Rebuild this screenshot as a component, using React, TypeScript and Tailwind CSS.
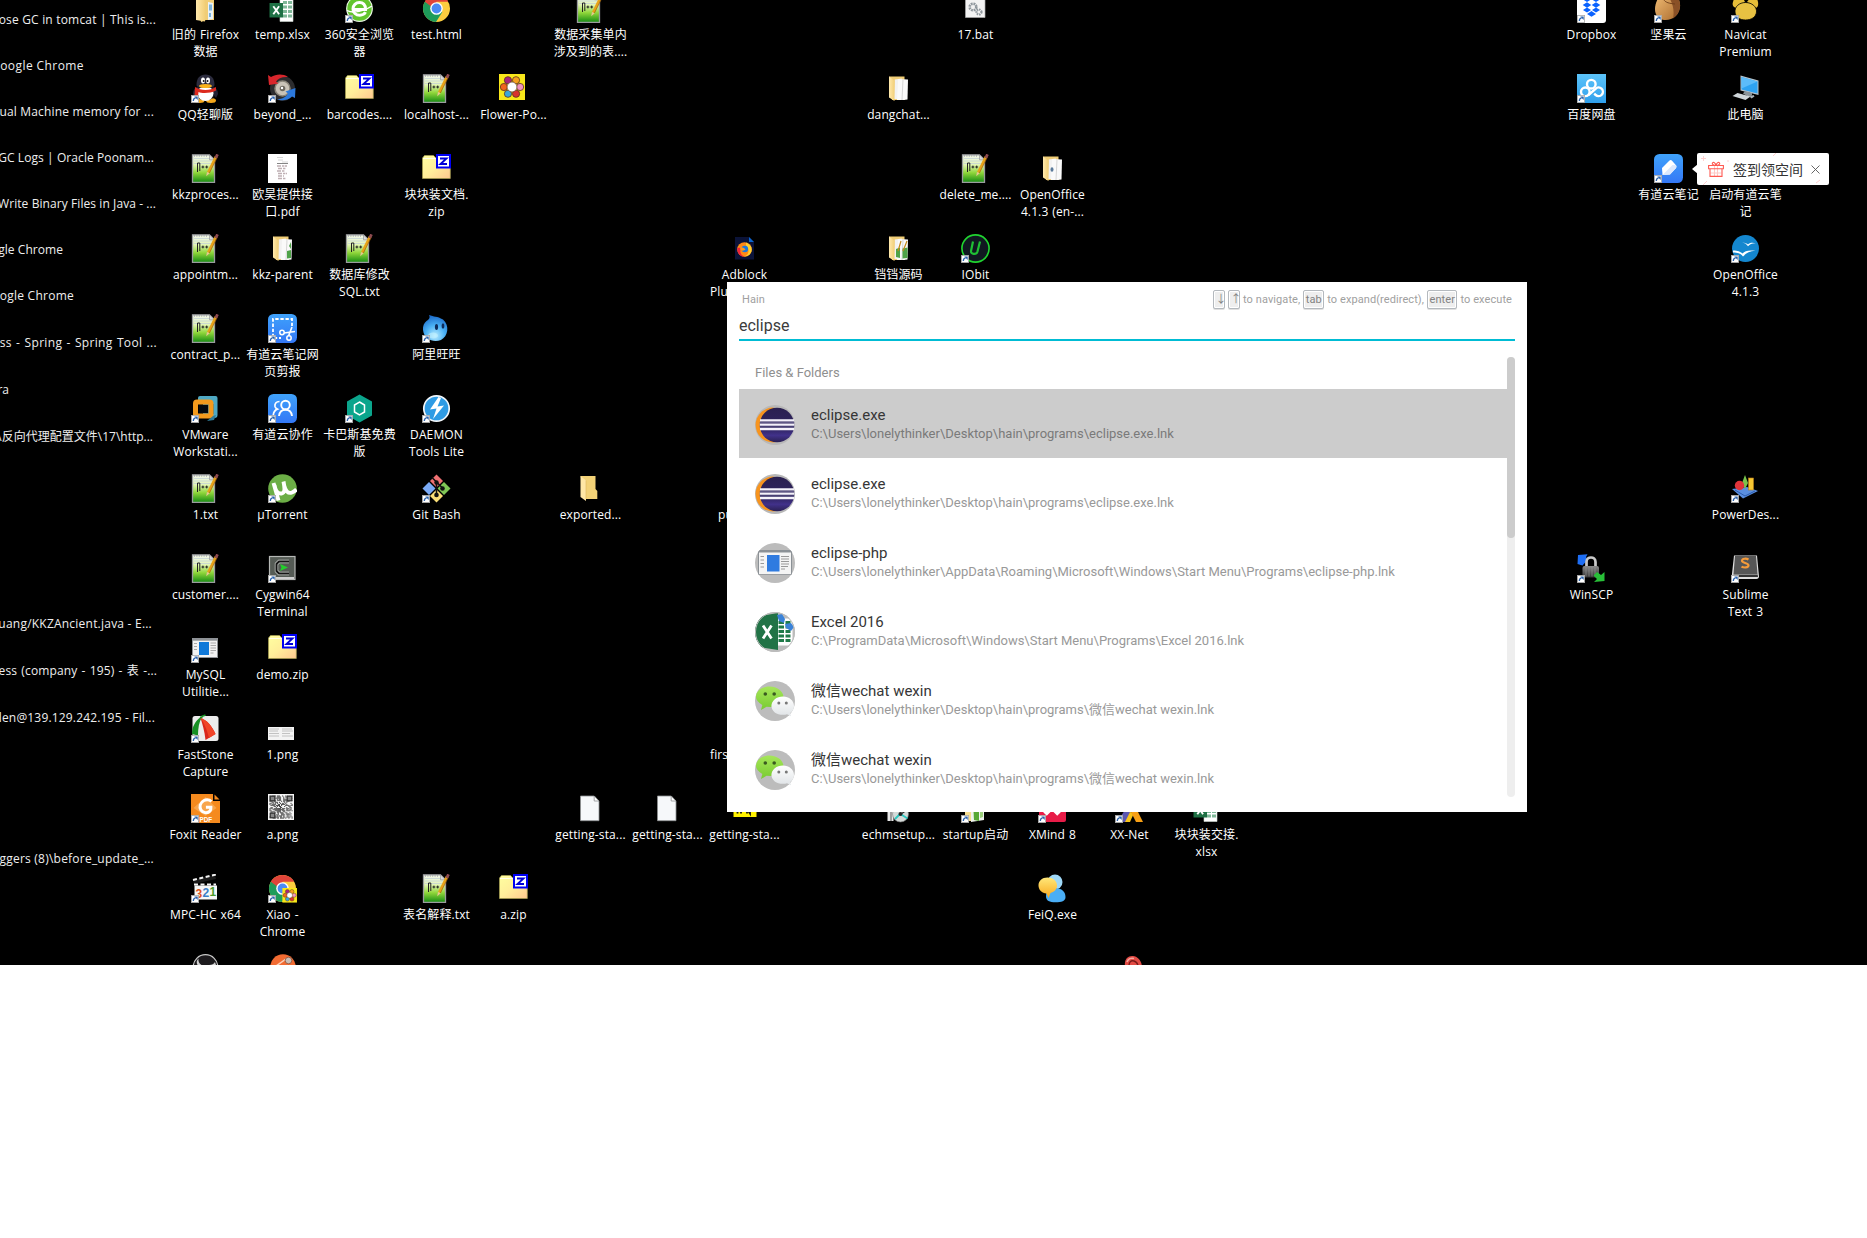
import React from 'react';

const defs = (
  <svg width="0" height="0" className="absolute">
    <defs>
      <linearGradient id="gNote" x1="0" y1="0" x2="0" y2="1">
        <stop offset="0" stopColor="#f4f8f0" />
        <stop offset=".35" stopColor="#e4f5b8" />
        <stop offset=".65" stopColor="#8fd63a" />
        <stop offset="1" stopColor="#138a12" />
      </linearGradient>
      <linearGradient id="gZip" x1="0" y1="0" x2="1" y2="1">
        <stop offset="0" stopColor="#ffffa0" />
        <stop offset=".5" stopColor="#ffee9a" />
        <stop offset="1" stopColor="#ffc890" />
      </linearGradient>
      <linearGradient id="gFold" x1="0" y1="0" x2="1" y2="0">
        <stop offset="0" stopColor="#ffe9ad" />
        <stop offset="1" stopColor="#f2cf78" />
      </linearGradient>
      <linearGradient id="gBlue" x1="0" y1="0" x2="0" y2="1">
        <stop offset="0" stopColor="#3fa2fb" />
        <stop offset="1" stopColor="#3478f6" />
      </linearGradient>
      <linearGradient id="gSky" x1="0" y1="0" x2="0" y2="1">
        <stop offset="0" stopColor="#5cc4fa" />
        <stop offset="1" stopColor="#2f9fec" />
      </linearGradient>
      <linearGradient id="gGray" x1="0" y1="0" x2="0" y2="1">
        <stop offset="0" stopColor="#8a8a8a" />
        <stop offset="1" stopColor="#333" />
      </linearGradient>
      <linearGradient id="gNut" x1="0" y1="0" x2="1" y2="1">
        <stop offset="0" stopColor="#f4c078" />
        <stop offset="1" stopColor="#a8692c" />
      </linearGradient>
      <radialGradient id="gDrop" cx=".5" cy=".8" r=".8">
        <stop offset="0" stopColor="#b8ecff" />
        <stop offset=".5" stopColor="#4ab0f4" />
        <stop offset="1" stopColor="#1a68c8" />
      </radialGradient>
      <linearGradient id="gWx" x1="0" y1="0" x2="0" y2="1">
        <stop offset="0" stopColor="#a6e65a" />
        <stop offset="1" stopColor="#78cb30" />
      </linearGradient>
      <linearGradient id="gWh" x1="0" y1="0" x2="0" y2="1">
        <stop offset="0" stopColor="#ffffff" />
        <stop offset="1" stopColor="#dfe3e6" />
      </linearGradient>
      <linearGradient id="gYel" x1="0" y1="0" x2="0" y2="1">
        <stop offset="0" stopColor="#ffe87a" />
        <stop offset="1" stopColor="#f9a81c" />
      </linearGradient>
      <linearGradient id="gEcl" x1="0" y1="0" x2="0" y2="1">
        <stop offset="0" stopColor="#2a2050" />
        <stop offset=".6" stopColor="#2f2460" />
        <stop offset=".8" stopColor="#41318a" />
        <stop offset="1" stopColor="#2a2052" />
      </linearGradient>
    </defs>
  </svg>
);

const note = (
  <g>
    <path d="M1.5.8h17l5 5v22.700h-22z" fill="url(#gNote)" stroke="#9a9c9e" strokeWidth="1.300" />
    <path d="M3 4.500h16M3 7h18M3 9.500h19" stroke="#bfcfd8" strokeWidth=".7" />
    <path d="M3 2h14" stroke="#8c9094" strokeWidth="1" strokeDasharray="1 1.400" />
    <path d="M18.500.8v5h5z" fill="#d8dadc" stroke="#8c8c8c" strokeWidth=".6" />
    <path d="M6.500 18V9h2.300V17" fill="none" stroke="#222" strokeWidth="1" />
    <path d="M10.500 13h2.800M11.900 11.600v2.800M14.300 13h2.800M15.700 11.600v2.800" stroke="#222" strokeWidth="1" />
    <path d="M25 2.500 17.200 18.500" stroke="#e8a318" strokeWidth="2.600" />
    <path d="M26.300 3.200 18.400 19" stroke="#a8660a" strokeWidth=".8" />
    <path d="m16 18-.8 4.200 3.400-2.900z" fill="#e8c690" />
    <path d="M26.500.3 24.700 4" stroke="#8c4a50" strokeWidth="2.800" />
  </g>
);

const zip = (
  <g>
    <path d="M.5 24.500V4l2-2.500h9L14 4v1h14.300v19.500z" fill="url(#gZip)" stroke="#a8a050" strokeWidth=".7" />
    <path d="M1 4.500h13" stroke="#fff" strokeWidth=".8" />
    <rect x="15" y="1" width="13" height="12.500" fill="#fff" stroke="#0000f4" strokeWidth="2" />
    <path d="M18 4.500h6.500L18.500 10H25" fill="none" stroke="#0000d8" strokeWidth="1.900" />
  </g>
);

const folder = (mark?: React.ReactNode) => (
  <g>
    <path d="M5 2.500h15.500v4L21 26H8z" fill="#f0cd76" />
    <path d="m10 25 .8-19.500 7-1 .7 20.500z" fill="#f2f2f2" />
    <path d="m13 26 1.200-21 9.800.5-.5 20-4 .5z" fill="#fafafa" />
    <path d="m18 26 1-20.500" stroke="#ccc" strokeWidth=".8" />
    {mark}
    <path d="m5 2.500 5.500 4.200V27L5 23.500z" fill="url(#gFold)" />
  </g>
);

const folderPlain = (
  <g>
    <path d="M4.500 2h15v13l1.800 2v8H10z" fill="#f3d277" />
    <path d="m4.500 2 5.500 4.500V27l-5.500-4z" fill="#ffe7a6" />
    <path d="M10 6.500V25" stroke="#dcb760" strokeWidth=".6" />
  </g>
);

const page = (
  <g>
    <path d="M4.500 2h13.700l4.800 5v19.700H4.500z" fill="#f6f8fa" stroke="#8e9092" strokeWidth=".8" />
    <path d="M18.200 2v5H23z" fill="#fff" stroke="#8e9092" strokeWidth=".8" />
  </g>
);

const excel = (
  <g>
    <path d="M12 1h13v26.500H12z" fill="#fff" stroke="#cfd8d2" strokeWidth=".6" />
    <path d="M15 4h9M15 8.500h9M15 13h9M15 17.500h9M15 22h9" stroke="#7fb898" strokeWidth="2.800" strokeDasharray="4 1" />
    <rect x="1.500" y="9" width="13.500" height="14.500" fill="#1f7145" />
    <path d="m5.300 12.300 5.800 8M11.100 12.300l-5.800 8" stroke="#fff" strokeWidth="1.900" />
  </g>
);

const chrome = (
  <g>
    <circle cx="14.500" cy="14.500" r="13.500" fill="#fccd3f" />
    <path d="M14.500 14.500 2.800 7.700A13.500 13.500 0 0 1 26.200 7.700H14.500z" fill="#e0443a" />
    <path d="M14.500 14.500 2.800 7.700A13.500 13.500 0 0 0 14 28l6.300-10z" fill="#1d9c5a" />
    <path d="M3 7.500 8.500 17l6-9.300z" fill="#e0443a" />
    <path d="M2.800 7.700 8.800 18l5-2z" fill="#1d9c5a" />
    <circle cx="14.500" cy="14.500" r="6.300" fill="#fff" />
    <circle cx="14.500" cy="14.500" r="4.900" fill="#4a8af4" />
  </g>
);

const petals = (s: number, ox: number, oy: number) => {
  const colors = ['#f5a11e', '#f093bd', '#d8322e', '#3aa6d8', '#f0641e', '#a8277c'];
  return (
    <g transform={`translate(${ox} ${oy}) scale(${s})`}>
      <rect width="26" height="26" fill="#f8e71a" />
      {colors.map((c, i) => {
        const a = -1.05 + (i * Math.PI) / 3;
        return <circle key={c} cx={13 + 8.100 * Math.cos(a)} cy={13 + 7.800 * Math.sin(a)} r="3.600" fill={c} stroke="#5a3020" strokeWidth=".8" />;
      })}
      <circle cx="13" cy="13" r="4.900" fill="#fff" stroke="#5a3020" strokeWidth=".6" />
    </g>
  );
};

const blueBox = <rect width="29" height="29" rx="5.500" fill="url(#gBlue)" />;

const firefoxPage = (
  <g>
    <path d="M5 3h14l5 5v17.500H5z" fill="#0b1338" />
    <path d="m19 3 5 5h-5z" fill="#0a66d0" />
    <circle cx="14.500" cy="15.500" r="7.300" fill="#ff8a16" />
    <path d="M16 8.500c5 2 6.500 6 5.300 9.500C20 21 17 22.700 14 22.500c4-1 5.500-5 4-8-1-2-2.500-3-2-6z" fill="#ffd02e" />
    <path d="M7.300 14c-.5 5 2.500 8.500 7 8.800-4-2-5-6-3-9.300z" fill="#f0243c" />
    <circle cx="14.800" cy="15" r="3.300" fill="#1a78e0" />
    <path d="M10 13.500c2-.5 4 .5 5.500 2-1.500 1.500-4 1.500-5 .2z" fill="#ff9a1c" />
  </g>
);

const icons: Record<string, React.ReactNode> = {
  note,
  zip,
  page,
  excel,
  chrome,
  folderPlain,
  folder: folder(),
  folderBlue: (
    <g>
      <path d="M5 0h18v26h-8l-5 2z" fill="#f0cd76" />
      <path d="m5 0 9 0v27.500L5 26z" fill="url(#gFold)" />
      <path d="m17 8 5 1v16l-5 1z" fill="#eaf2f8" />
      <path d="M18 10.500h3v6h-3zM18 19h2v4h-2z" fill="#7db4dc" />
    </g>
  ),
  folderGreen: folder(<path d="m19 17 4-1v8l-4 .5zM21 12l2-4v7z" fill="#4fa348" />),
  folderDot: folder(<ellipse cx="14" cy="15.500" rx="1.500" ry="2.200" fill="#5a7a9a" />),
  folderGreen2: folder(
    <g>
      <path d="m12 15 4-1.500V24l-4-1zM18.500 14.500l5-1V24l-5 .5z" fill="#4fa348" />
      <path d="m17 7-3 10M23 7l-4 10" stroke="#c48a1c" strokeWidth="1.200" />
    </g>
  ),
  s360: (
    <g>
      <circle cx="14.500" cy="14.500" r="12.800" fill="#62c52e" stroke="#e8f6e0" strokeWidth="1.200" />
      <path d="M8 15.500h12.500c.2-5-2.700-7-6-7-3.700 0-6.500 2.800-6.500 6.400s2.800 6.300 6.800 6.300c2.700 0 4.700-1 5.700-3" fill="none" stroke="#fff" strokeWidth="3" />
      <path d="M2 16.500C8 20 20 17 27 12" fill="none" stroke="#fff" strokeWidth="1.400" />
    </g>
  ),
  bat: (
    <g>
      <path d="M4.500 2H24v21.500H4.500z" fill="#f3f3f3" stroke="#aaa" strokeWidth=".7" />
      <circle cx="12" cy="13" r="3.300" fill="none" stroke="#8f979d" strokeWidth="2.600" strokeDasharray="1.800 .8" />
      <circle cx="18" cy="18" r="2.500" fill="none" stroke="#8f979d" strokeWidth="2.200" strokeDasharray="1.500 .8" />
    </g>
  ),
  dropbox: (
    <g>
      <rect width="29" height="29" rx="3" fill="#fff" />
      <path d="m10 2.500 4.300 2.800L10 8 5.700 5.300zm9 0 4.300 2.800L19 8l-4.300-2.700zM10 8.300l4.300 2.800-4.300 2.700-4.300-2.700zm9 0 4.300 2.800-4.300 2.700-4.300-2.700zM10 13.500l4 2.500-4 2.500L6 16zm9 0 4 2.500-4 2.500-4-2.500zM14.500 17l4.500 2.900-4.500 2.900-4.500-2.900z" fill="#0a62ff" />
    </g>
  ),
  nut: (
    <g>
      <path d="M13-2C20-2 27 4 26 13 25 21 18 27 10 26 4 25 1 21 1 15 1 8 6-2 13-2z" fill="url(#gNut)" />
      <path d="M13-2c7 0 14 6 13 15-.5 5-3 9-7 11.500C21 15 18 6 11.500-1z" fill="#8a5127" />
      <path d="M11 0C8 5 9 9 21 10" fill="none" stroke="#6b3c18" strokeWidth=".9" />
    </g>
  ),
  navicat: (
    <g>
      <path d="M2 8C3 3 7 1 12 4l2 4-9 6C2 13 1 11 2 8zM27 8c-1-5-4-7-8-4l-3 4 9 6c2-1 2.500-3 2-6z" fill="#e6bd38" />
      <path d="M14.500 8.500C21 8.500 26 13 25.500 18c-.5 5-5 8-11 8s-10-3-10.500-8c-.5-5 4-9.500 10.500-9.500z" fill="#e8c142" stroke="#000" strokeWidth=".8" />
    </g>
  ),
  qq: (
    <g>
      <ellipse cx="8.500" cy="26.500" rx="5" ry="2.500" fill="#f5a81c" />
      <ellipse cx="20" cy="26.500" rx="5" ry="2.500" fill="#f5a81c" />
      <ellipse cx="14.500" cy="18" rx="11" ry="8.500" fill="#16161e" />
      <path d="M2 20c0-4 2-6 4-7l3 3-5 8zM27 20c0-4-2-6-4-7l-3 3 5 8z" fill="#222234" />
      <ellipse cx="14.500" cy="19.500" rx="8" ry="7.500" fill="#fff" />
      <path d="M5.500 11C5.500 4 9 .5 14.500.5S23.500 4 23.500 11c0 4-18 4-18 0z" fill="#2c2c3e" />
      <ellipse cx="12" cy="6.500" rx="2" ry="2.900" fill="#fff" />
      <ellipse cx="17" cy="6.500" rx="2" ry="2.900" fill="#fff" />
      <circle cx="12.700" cy="7" r="1" fill="#111" />
      <circle cx="16.500" cy="7" r="1" fill="#111" />
      <ellipse cx="14.500" cy="12" rx="6.500" ry="2" fill="#f9b21c" />
      <path d="M4 13c6 4 15 4 21 0v3.500c-6 3-14 3-17.500 1.500L7 23c-1 1-3 0-3.500-1z" fill="#dc2a1e" />
    </g>
  ),
  beyond: (
    <g>
      <circle cx="14.500" cy="14.500" r="12.500" fill="#2c2c2e" />
      <circle cx="14.500" cy="14.500" r="7.500" fill="#c9c3b8" />
      <circle cx="14.500" cy="14.500" r="7.500" fill="none" stroke="#8a857a" strokeWidth="1.500" />
      <circle cx="14.500" cy="14.500" r="2.800" fill="#6c685f" />
      <circle cx="14" cy="14" r="1.200" fill="#fff" />
      <path d="M0 1l3 2C8 0 15-.5 20 3c-6-.5-10 1.500-12 4.500l2.500 2L1 11z" fill="#d8262c" />
      <path d="m27.500 14-.5 10-3-1.500C19 27 13 27 9 25c6 0 9-2 11-5.500l-2.500-2z" fill="#2b78dc" />
    </g>
  ),
  flower: petals(1, 0, 0),
  baidu: (
    <g>
      <rect width="29" height="29" fill="url(#gSky)" />
      <circle cx="14.300" cy="10.200" r="4.300" fill="none" stroke="#fff" strokeWidth="2.400" />
      <circle cx="8.300" cy="17.800" r="4.300" fill="none" stroke="#fff" strokeWidth="2.400" />
      <path d="m11.500 21 7-6.200a4.300 4.300 0 1 1 .2 6.200l-1.500-1.300" fill="none" stroke="#fff" strokeWidth="2.400" />
    </g>
  ),
  pc: (
    <g>
      <path d="m9.500 1.500 18 5V21l-18-4.500z" fill="#b8c4cc" />
      <path d="m10.500 3 16 4.500v12l-16-4z" fill="#2ea3f2" />
      <path d="m10.500 3 16 4.500-16 7z" fill="#5cbcfa" />
      <path d="M12 19.500 14 17l7 2v2.500l-3 1.500z" fill="#8b949a" />
      <path d="m1.500 22 5-3 13 3.500-5 3.500z" fill="#cfd6da" />
      <path d="m18.500 22.500 4-1.500 1 1.500-3 2z" fill="#a9b2b8" />
    </g>
  ),
  pdf: (
    <g>
      <rect width="29" height="29" fill="#fff" />
      <path d="M9 3.500h6M10 6h5M14 8h6" stroke="#ccc" strokeWidth=".8" />
      <path d="M9 9.500h11" stroke="#777" strokeWidth=".9" />
      <path d="M9 12h10M10 14.500h8M9 17h8M10 19.500h9M10 22h6M10 24.500h8" stroke="#bfb0b4" strokeWidth="1.300" strokeDasharray="4 1 2 .6" />
    </g>
  ),
  youdao: (
    <g>
      {blueBox}
      <path d="m8.500 21-.5-7L15 7c1-1 2-1.300 3-.3l4 4.500c.6 1 .6 2-.2 3L16 20.500z" fill="#fff" />
      <path d="m8.500 21 10-10 3.500.2c.6 1 .6 2-.2 3L16 20.500z" fill="#dbe8fd" />
    </g>
  ),
  firefoxPage,
  iobit: (
    <g>
      <circle cx="14.500" cy="14.500" r="13.600" fill="#101820" stroke="#20d430" strokeWidth="1.600" />
      <path d="M12 7.500 10 17c-.6 3.500 5.500 4 6.500.5L19 7.500" fill="none" stroke="#1fbf34" strokeWidth="2.200" />
    </g>
  ),
  openoffice: (
    <g>
      <circle cx="14.500" cy="14.500" r="13.500" fill="#1487cf" />
      <path d="M11 8.500c3 .5 5 .5 6 2 1.500-1.800 4-2.300 8-1.300-4-.2-6 1-8 3-1.300-2-3-3-6-3.700z" fill="#fff" />
      <path d="M2 16.500c5 0 7 1 9.500 3 2.500-2.500 6-3.500 13-2.500-6 0-9 2-12.500 5.500-2.500-3-5-4-10-4z" fill="#fff" />
    </g>
  ),
  clip: (
    <g>
      {blueBox}
      <path d="M24 12V5H5v19h8" fill="none" stroke="#fff" strokeWidth="1.800" strokeDasharray="3.300 1.800" />
      <circle cx="14" cy="18.500" r="2.200" fill="none" stroke="#fff" strokeWidth="1.500" />
      <circle cx="21" cy="24" r="2.200" fill="none" stroke="#fff" strokeWidth="1.500" />
      <path d="m16 19 11-1.500M20.500 22l3.500-9" stroke="#fff" strokeWidth="1.600" />
    </g>
  ),
  wangwang: (
    <g>
      <path d="M7 1c5 2 8 1 14 4.500 7 6 5 17-2 20.500-8 3-17-1-18-10-.3-4 1-7 3.500-9C8 5 8 3 7 1z" fill="url(#gDrop)" />
      <ellipse cx="14.500" cy="13" rx="1.600" ry="3" fill="#0e2c5c" />
      <ellipse cx="21" cy="12" rx="1.400" ry="2.700" fill="#0e2c5c" />
      <ellipse cx="11" cy="21.500" rx="5" ry="3" fill="#c5f2ff" opacity=".6" />
    </g>
  ),
  vmware: (
    <g>
      <path d="M9 2h15.500a2 2 0 0 1 2 2v17a3 3 0 0 1-3 3H20V9H7V4a2 2 0 0 1 2-2z" fill="#4fa9c4" />
      <path d="M12 10h11v10H12z" fill="#2c7f9e" />
      <rect x="4.500" y="8" width="15.500" height="14" rx="1.500" fill="none" stroke="#f39a1d" strokeWidth="5" />
      <rect x="8" y="11" width="9" height="8" fill="#050a10" />
      <path d="m22 22 3-1-2 5-7 1" fill="#2f7c98" />
    </g>
  ),
  team: (
    <g>
      {blueBox}
      <circle cx="17.500" cy="11" r="4.300" fill="none" stroke="#fff" strokeWidth="1.900" />
      <path d="M11 22c.5-4 3-6.300 6.500-6.300S23.500 18 24 22" fill="none" stroke="#fff" strokeWidth="1.900" />
      <path d="M11.500 7.500C8 7.500 6.500 10 7 12.500c.3 1.200 1 2 2.300 2.600C7 16 5.600 18 5.300 21" fill="none" stroke="#fff" strokeWidth="1.700" />
    </g>
  ),
  kasper: (
    <g>
      <path d="m14.500.5 12.500 7v14l-12.500 7-12.500-7v-14z" fill="#0ba58c" />
      <path d="m14.500 8 5 3v7l-5 3-5-3v-7z" fill="none" stroke="#fff" strokeWidth="1.500" />
    </g>
  ),
  daemon: (
    <g>
      <circle cx="14.500" cy="14.500" r="12.700" fill="#2f9be4" stroke="#f2f6fa" strokeWidth="1.700" />
      <path d="M16.500 3 8 15.500l6.500-1L11 25l11-13.500-6.500 1L19 4z" fill="#fff" />
    </g>
  ),
  utorrent: (
    <g>
      <circle cx="14.500" cy="14.500" r="14.300" fill="#6cae46" />
      <path d="m5.500 9 5 17.500M6.500 11c1 6 3.500 9 7 8.500s3.500-4.500 2-12M16 11c1.500 6 4 9 8 7.500 2-.7 3.500-2 4.500-3" fill="none" stroke="#fff" strokeWidth="3.900" />
    </g>
  ),
  git: (
    <g>
      <path d="m14.500.500 6.500 6.500-6.500 6.500L8 7z" fill="#f07072" />
      <path d="m7 8 6.500 6.500L7 21 .5 14.500z" fill="#7aaaf6" />
      <path d="m22 8 6.500 6.500L22 21l-6.500-6.500z" fill="#80c656" />
      <path d="m14.500 15.500 6.500 6.500-6.500 6.500L8 22z" fill="#fbdf78" />
      <path d="M10 3.500 20.500 14M14.500 7.500v13" stroke="#111" strokeWidth="1.600" />
      <circle cx="14.500" cy="8.500" r="2.200" fill="#111" />
      <circle cx="20.500" cy="14.500" r="2.300" fill="#111" />
      <circle cx="14.500" cy="21" r="2.300" fill="#111" />
    </g>
  ),
  power: (
    <g>
      <path d="m1 15 15-2 11 4-15 7.500z" fill="#5a8fe0" />
      <path d="m4 16 10 6 10-5" fill="none" stroke="#2d5cae" strokeWidth="1" />
      <path d="m14 1 3 8-3 6-3-6z" fill="#79c44c" />
      <circle cx="8.500" cy="11.500" r="4.700" fill="#e0343a" />
      <rect x="17.500" y="4" width="5" height="12" fill="#f6c632" stroke="#b87f18" strokeWidth=".6" />
    </g>
  ),
  cygwin: (
    <g>
      <rect x="1.500" y="2.500" width="25.500" height="23" fill="#555b55" stroke="#b6b8b6" strokeWidth="1.200" />
      <path d="M3 24h23" stroke="#d0d0d0" strokeWidth="2" />
      <path d="M21 7.500H11L8.500 10v7l2.500 2.500h10" fill="none" stroke="#d0d4d0" strokeWidth="3.400" />
      <path d="M21 7.500H11L8.500 10v7l2.500 2.500h10" fill="none" stroke="#151515" strokeWidth="2" />
      <path d="m12 10 8 3.500-8 3.500 1.500-3.500z" fill="#23cf2c" />
    </g>
  ),
  winscp: (
    <g>
      <path d="M1 1 10.500.2 9 3l1.500 3-5 5.500L.5 10z" fill="#1e6ef4" />
      <path d="M9.500 13V8c0-6 9-6 9 0v5" fill="none" stroke="#c9c9c9" strokeWidth="2.700" />
      <rect x="5.500" y="12" width="16.500" height="11.500" rx="2" fill="url(#gGray)" />
      <path d="M9 13v9.500M12 13v9.500M15 13v9.500M18 13v9.500" stroke="#999" strokeWidth=".6" />
      <path d="m27.500 27-10.500 1 3-3-3.500-3.500L20 18l4 3 3.500-3z" fill="#28bf38" />
    </g>
  ),
  sublime: (
    <g>
      <path d="M3 1.500h23l2 21c0 1.500-1 2.500-2.500 2.500H2.500C1 25 .5 24 .7 22.500z" fill="#ddd" />
      <path d="M4 2h21l1.500 18h-24z" fill="#565656" />
      <path d="m2.500 20.500 24.200 0 .3 2.500H2.300z" fill="#333" />
      <path d="M17.500 5.500c-2-1.200-6.500-1.300-6.500 1.300 0 2.300 6.500 2 6.500 4.500 0 2.800-5 2.500-7 1.300" fill="none" stroke="#f59b3a" strokeWidth="2.200" />
    </g>
  ),
  mysql: (
    <g>
      <rect x="1.500" y="4.500" width="25" height="19" fill="#f2f2f2" stroke="#8e9296" strokeWidth="1" />
      <path d="M1.500 5.700h25" stroke="#8e9296" strokeWidth="2" />
      <rect x="8" y="8" width="10" height="13" fill="#0f78d8" />
      <path d="M3 9.500h3M3 12.500h3M3 15.500h3M19.500 9h5.500M19.500 11.500h5.500M19.500 14h5.500M19.500 16.500h5.500M19.500 19h3" stroke="#aaa" strokeWidth="1" />
    </g>
  ),
  faststone: (
    <g>
      <rect x="1.500" y="2" width="26" height="25" rx="2.500" fill="#ececec" />
      <path d="M10 3C4 7 1 13 1 20l6 1.500C7 14 8 8 11 3z" fill="#178f24" />
      <path d="m10.500 2.500 4-1.500M9 3l2.500 1" stroke="#178f24" strokeWidth="1.800" />
      <path d="M9.500 4c2 6 4 13 5 22l10-6C21 12 16 6 9.500 4z" fill="#d9261c" />
      <path d="M9.500 4c3 4 6.500 11 8.500 20l6.500-4C21 12 16 6 9.500 4z" fill="#f04428" />
    </g>
  ),
  png1: (
    <g>
      <rect y="13" width="26" height="13" fill="#f3f3f3" />
      <path d="M1 15h10M14 15h10M1 17h9M14 17h11M1 19.500h10M14 19.500h8M1 22h10M14 22h11" stroke="#b5b5b5" strokeWidth=".8" />
    </g>
  ),
  qr: (
    <g>
      <rect width="26" height="26" fill="#f5f5f5" />
      {Array.from({ length: 22 * 22 }, (_, i) => {
        const x = i % 22;
        const y = Math.floor(i / 22);
        const h = Math.sin(x * 12.9898 + y * 78.233) * 43758.5453;
        return h - Math.floor(h) < 0.58 ? <rect key={i} x={1.5 + x * 1.05} y={1.5 + y * 1.05} width="1.050" height="1.050" fill="#444" /> : null;
      })}
      {[[1.5, 1.5], [18.500, 1.5], [1.5, 18.500]].map(([x, y]) => (
        <rect key={`${x}-${y}`} x={x + 0.700} y={y + 0.700} width="4.600" height="4.600" fill="#888" stroke="#333" strokeWidth="1.200" />
      ))}
    </g>
  ),
  foxit: (
    <g>
      <path d="M0 0h22v7h7v22H0z" fill="#f58a1e" />
      <path d="m23.500.5 5 5h-5z" fill="#f58a1e" />
      <path d="m14.500 3 11 11-11 8-12-8z" fill="#f8a54c" />
      <path d="M20.500 7.500c-2-1.800-5-2.200-7.500-1-4 2-5 6.500-3 9.700 2 3 7 3.300 9 .8.800-1 1-2.300.9-3.800h-5" fill="none" stroke="#fff" strokeWidth="3" />
      <text x="8.500" y="27.500" fontSize="6.300" fontWeight="700" fill="#fff" fontFamily="Liberation Sans, sans-serif">PDF</text>
    </g>
  ),
  mpc: (
    <g>
      <path d="m2 6 22-5 1 4L3 10z" fill="#1a1a1a" />
      <path d="m2 6 23-5.500M3 10.500h22" stroke="#f2f2f2" strokeWidth="2" strokeDasharray="4 2.500" />
      <rect x="3.500" y="11.500" width="22.500" height="14" fill="#f7f7f7" />
      <g fontSize="12" fontWeight="700" fontFamily="Liberation Sans, sans-serif">
        <text x="4.500" y="23.500" fill="#e0531c">3</text>
        <text x="11.500" y="23" fill="#3b7ec8">2</text>
        <text x="18.500" y="22" fill="#4a9a2c">1</text>
      </g>
    </g>
  ),
  xiao: (
    <g>
      {chrome}
      {petals(0.560, 14.400, 14)}
    </g>
  ),
  feiq: (
    <g>
      <circle cx="17" cy="8" r="7.500" fill="#9fd8f8" />
      <path d="M8 22c0-6 4-8 9-8 7 0 10.500 4 10.500 9 0 4-4 5.300-10 5.300S8 27 8 22z" fill="#4aaef6" />
      <path d="M9.500 3.500c5.500 0 9.500 3.300 9.500 8 0 4-3 6.500-6.500 7.500l-2 5-2-4.500C4 19 .5 16 .5 11.500c0-4.700 3.500-8 9-8z" fill="url(#gYel)" />
    </g>
  ),
  echm: (
    <g>
      <path d="M3.500 4h6v23h-6z" fill="#e8e8e8" />
      <path d="M7 10v17" stroke="#555" strokeWidth="1" />
      <circle cx="16.500" cy="20" r="8" fill="#d4dad8" stroke="#777" strokeWidth=".6" />
      <path d="m16 20-5 5M16.500 20l7 4.500" stroke="#2cc8c0" strokeWidth="1.800" />
      <path d="m17 20 6-4" stroke="#222" strokeWidth="1.200" />
      <circle cx="16.500" cy="20" r="2" fill="#222" />
    </g>
  ),
  startup: (
    <g>
      <path d="M4 3h8v24H4z" fill="#f7dd8e" />
      <path d="M10 5h13v21l-13 2z" fill="#eef2ec" />
      <path d="M12 8h6v19l-5-1z" fill="#57a835" />
      <path d="m19 10 3-1v14l-3 1z" fill="#9dd07c" />
    </g>
  ),
  xmind: (
    <g>
      <rect x="1" y="1" width="27" height="27" rx="2" fill="#e81c48" />
      <path d="m7 6 14 14M21 6 7 20" stroke="#fff" strokeWidth="5" />
    </g>
  ),
  xxnet: (
    <g>
      <path d="m2 28 12-18h5L11 28z" fill="#5a56b0" />
      <path d="m10 28 5-10 4 1-4 9z" fill="#f8c31a" />
      <path d="M11 8h7l10 20h-7z" fill="#f7a016" />
    </g>
  ),
  yellowPy: (
    <g>
      <rect x="3.500" y="1" width="23" height="22" fill="#fff200" />
      <path d="M7.500 14v5.500M11 15v4.500M11 16h4M17 19.500V15l3 4.500v-5" stroke="#111" strokeWidth="1.800" fill="none" />
    </g>
  ),
  obs: (
    <g>
      <circle cx="14.500" cy="13" r="12.300" fill="#1c1a1d" stroke="#c9c9c9" strokeWidth="1.200" />
      <path d="M7.500 4.500c-2 2-2.300 4-1 6.500h4C8 9.500 7 7 7.500 4.500zM18 11c3 0 5-1 6-3l1 3z" fill="#d4d4d4" />
    </g>
  ),
  postman: (
    <g>
      <circle cx="15" cy="13" r="12.800" fill="#f26b32" />
      <path d="m8 12 10-7" stroke="#fbd3bd" strokeWidth="1.500" />
      <circle cx="20.500" cy="6.500" r="3.300" fill="#c9bdb6" stroke="#8a5238" strokeWidth=".8" />
    </g>
  ),
  redBall: (
    <g>
      <path d="M10 12C9 5 13 1.500 18 2s9 5 9 12z" fill="#e24a44" />
      <path d="M14 12c0-4 2-6 5-5s4 3 4 6" fill="none" stroke="#7a1a18" strokeWidth="1.400" />
      <path d="M12 8c1-3 4-4.500 7-3.500" stroke="#f5a8a0" strokeWidth="1.600" fill="none" />
    </g>
  ),
};

type Item = {
  c: number;
  r: number;
  i?: string;
  s?: boolean;
  l?: string[];
  indent?: string;
};

const items: Item[] = [
  { c: 0, r: 0, i: 'folderBlue', l: ['旧的 Firefox', '数据'] },
  { c: 1, r: 0, i: 'excel', l: ['temp.xlsx'] },
  { c: 2, r: 0, i: 's360', s: true, l: ['360安全浏览', '器'] },
  { c: 3, r: 0, i: 'chrome', l: ['test.html'] },
  { c: 5, r: 0, i: 'note', l: ['数据采集单内', '涉及到的表....'] },
  { c: 10, r: 0, i: 'bat', l: ['17.bat'] },
  { c: 18, r: 0, i: 'dropbox', s: true, l: ['Dropbox'] },
  { c: 19, r: 0, i: 'nut', s: true, l: ['坚果云'] },
  { c: 20, r: 0, i: 'navicat', s: true, l: ['Navicat', 'Premium'] },
  { c: 0, r: 1, i: 'qq', s: true, l: ['QQ轻聊版'] },
  { c: 1, r: 1, i: 'beyond', s: true, l: ['beyond_...'] },
  { c: 2, r: 1, i: 'zip', l: ['barcodes....'] },
  { c: 3, r: 1, i: 'note', l: ['localhost-...'] },
  { c: 4, r: 1, i: 'flower', l: ['Flower-Po...'] },
  { c: 9, r: 1, i: 'folder', l: ['dangchat...'] },
  { c: 18, r: 1, i: 'baidu', s: true, l: ['百度网盘'] },
  { c: 20, r: 1, i: 'pc', l: ['此电脑'] },
  { c: 0, r: 2, i: 'note', l: ['kkzproces...'] },
  { c: 1, r: 2, i: 'pdf', l: ['欧昊提供接', '口.pdf'] },
  { c: 3, r: 2, i: 'zip', l: ['块块装文档.', 'zip'] },
  { c: 10, r: 2, i: 'note', l: ['delete_me....'] },
  { c: 11, r: 2, i: 'folderDot', l: ['OpenOffice', '4.1.3 (en-...'] },
  { c: 19, r: 2, i: 'youdao', s: true, l: ['有道云笔记'] },
  { c: 20, r: 2, l: ['启动有道云笔', '记'] },
  { c: 0, r: 3, i: 'note', l: ['appointm...'] },
  { c: 1, r: 3, i: 'folderGreen', l: ['kkz-parent'] },
  { c: 2, r: 3, i: 'note', l: ['数据库修改', 'SQL.txt'] },
  { c: 7, r: 3, i: 'firefoxPage', l: ['Adblock', 'Plu'], indent: 'self-start pl-[4px]' },
  { c: 9, r: 3, i: 'folderGreen2', l: ['铛铛源码'] },
  { c: 10, r: 3, i: 'iobit', s: true, l: ['IObit'] },
  { c: 20, r: 3, i: 'openoffice', s: true, l: ['OpenOffice', '4.1.3'] },
  { c: 0, r: 4, i: 'note', l: ['contract_p...'] },
  { c: 1, r: 4, i: 'clip', s: true, l: ['有道云笔记网', '页剪报'] },
  { c: 3, r: 4, i: 'wangwang', s: true, l: ['阿里旺旺'] },
  { c: 0, r: 5, i: 'vmware', s: true, l: ['VMware', 'Workstati...'] },
  { c: 1, r: 5, i: 'team', s: true, l: ['有道云协作'] },
  { c: 2, r: 5, i: 'kasper', s: true, l: ['卡巴斯基免费', '版'] },
  { c: 3, r: 5, i: 'daemon', s: true, l: ['DAEMON', 'Tools Lite'] },
  { c: 0, r: 6, i: 'note', l: ['1.txt'] },
  { c: 1, r: 6, i: 'utorrent', s: true, l: ['µTorrent'] },
  { c: 3, r: 6, i: 'git', s: true, l: ['Git Bash'] },
  { c: 5, r: 6, i: 'folderPlain', l: ['exported...'] },
  { c: 7, r: 6, l: ['pu'], indent: 'self-start pl-[12px]' },
  { c: 20, r: 6, i: 'power', s: true, l: ['PowerDes...'] },
  { c: 0, r: 7, i: 'note', l: ['customer....'] },
  { c: 1, r: 7, i: 'cygwin', s: true, l: ['Cygwin64', 'Terminal'] },
  { c: 18, r: 7, i: 'winscp', s: true, l: ['WinSCP'] },
  { c: 20, r: 7, i: 'sublime', s: true, l: ['Sublime', 'Text 3'] },
  { c: 0, r: 8, i: 'mysql', s: true, l: ['MySQL', 'Utilitie...'] },
  { c: 1, r: 8, i: 'zip', l: ['demo.zip'] },
  { c: 0, r: 9, i: 'faststone', s: true, l: ['FastStone', 'Capture'] },
  { c: 1, r: 9, i: 'png1', l: ['1.png'] },
  { c: 7, r: 9, l: ['firs'], indent: 'self-start pl-[4px]' },
  { c: 0, r: 10, i: 'foxit', s: true, l: ['Foxit Reader'] },
  { c: 1, r: 10, i: 'qr', l: ['a.png'] },
  { c: 5, r: 10, i: 'page', l: ['getting-sta...'] },
  { c: 6, r: 10, i: 'page', l: ['getting-sta...'] },
  { c: 7, r: 10, i: 'yellowPy', l: ['getting-sta...'] },
  { c: 9, r: 10, i: 'echm', l: ['echmsetup...'] },
  { c: 10, r: 10, i: 'startup', s: true, l: ['startup启动'] },
  { c: 11, r: 10, i: 'xmind', s: true, l: ['XMind 8'] },
  { c: 12, r: 10, i: 'xxnet', s: true, l: ['XX-Net'] },
  { c: 13, r: 10, i: 'excel', l: ['块块装交接.', 'xlsx'] },
  { c: 0, r: 11, i: 'mpc', s: true, l: ['MPC-HC x64'] },
  { c: 1, r: 11, i: 'xiao', s: true, l: ['Xiao -', 'Chrome'] },
  { c: 3, r: 11, i: 'note', l: ['表名解释.txt'] },
  { c: 4, r: 11, i: 'zip', l: ['a.zip'] },
  { c: 11, r: 11, i: 'feiq', l: ['FeiQ.exe'] },
  { c: 0, r: 12, i: 'obs' },
  { c: 1, r: 12, i: 'postman' },
  { c: 12, r: 12, i: 'redBall' },
];

function DesktopItem({ c, r, i, s, l = [], indent }: Item) {
  return (
    <div className="flex h-20 w-[77px] flex-col items-center" style={{ gridColumn: c + 1, gridRow: r + 1 }}>
      <svg viewBox="0 0 29 29" className="h-[29px] w-[29px] shrink-0">
        {i && icons[i]}
        {s && (
          <g>
            <rect x=".4" y="21.400" width="7.200" height="7.200" fill="#fff" stroke="#a8a8a8" strokeWidth=".8" />
            <path d="M2.300 27c0-1.800.6-2.800 2.300-3.200" fill="none" stroke="#2b62ac" strokeWidth="1.300" />
            <path d="M3.300 22.500h3.400v3.400z" fill="#2b62ac" />
          </g>
        )}
      </svg>
      <div className="mt-[3px] flex w-full flex-col items-center tracking-[0.12px] [word-spacing:0.7px]">
        {l.map((line, k) => (
          <span key={line} className={indent && k === l.length - 1 ? `${indent} whitespace-pre` : 'whitespace-pre'}>
            {line}
          </span>
        ))}
      </div>
    </div>
  );
}

const tasks: { t: string; box: string }[] = [
  { t: 'ose GC in tomcat | This is...', box: 'h-[46px] w-[156px] tracking-[0.19px]' },
  { t: 'oogle Chrome', box: 'h-[46px] w-[84px] tracking-[0.42px]' },
  { t: 'ual Machine memory for ...', box: 'h-[46px] w-[154px] tracking-[0.18px]' },
  { t: 'GC Logs | Oracle Poonam...', box: 'h-[46px] w-[154px] tracking-[0.08px]' },
  { t: 'Write Binary Files in Java - ...', box: 'h-[46px] w-[156px] tracking-[0.08px]' },
  { t: 'gle Chrome', box: 'h-[46px] w-[63px] tracking-[0.05px]' },
  { t: 'ogle Chrome', box: 'h-[47px] w-[74px] tracking-[0.25px]' },
  { t: 'ss - Spring - Spring Tool ...', box: 'h-[47px] w-[157px] tracking-[0.33px] [word-spacing:0.8px]' },
  { t: 'ra', box: 'h-[47px] w-[9px]' },
  { t: '\\反向代理配置文件\\17\\http...', box: 'h-[187px] w-[153px]' },
  { t: 'uang/KKZAncient.java - E...', box: 'h-[47px] w-[152px] tracking-[0.22px]' },
  { t: 'ess (company - 195) - 表 -...', box: 'h-[47px] w-[157px] tracking-[0.12px] [word-spacing:1px]' },
  { t: 'len@139.129.242.195 - Fil...', box: 'h-[141px] w-[155px] tracking-[0.17px]' },
  { t: 'ggers (8)\\before_update_...', box: 'h-[47px] w-[154px] tracking-[0.22px]' },
];

const eclipseAvatar = (
  <g>
    <circle cx="20" cy="20" r="20" fill="#b8b8b8" />
    <circle cx="18" cy="20" r="17.400" fill="#f7941e" />
    <path d="M18 2.500 22 1v2.500z" fill="#b8b8b8" />
    <circle cx="22" cy="20" r="17.300" fill="url(#gEcl)" />
    <path d="M5 15.300h34.200M4.800 19.700h34.600M5 24h34.200" stroke="#f4f2fa" strokeWidth="2.300" />
    <path d="M4.900 17.600h34.200M4.900 22h34.200" stroke="#6a6490" strokeWidth=".9" />
  </g>
);

const wechatAvatar = (
  <g>
    <circle cx="20" cy="20" r="20" fill="#bcbcbc" />
    <path d="M14.500 5.500C22 5.500 28 10 28.500 16c-5 0-11.500 3-12 10l-5-.3L6 29l1.300-5C3 21.500 1 18.500 1 16c0-6 6-10.500 13.500-10.500z" fill="url(#gWx)" />
    <circle cx="10.300" cy="13" r="1.800" fill="#3a5a20" />
    <circle cx="19.200" cy="13" r="1.800" fill="#3a5a20" />
    <path d="M28 15.500c6 0 11 4 11 9.500 0 3-1.500 5.500-4 7.300l1 3-4-2c-1 .4-2.500.5-4 .5-6.500 0-11.500-3.500-11.500-8.800S21.500 15.500 28 15.500z" fill="url(#gWh)" />
    <circle cx="23.800" cy="22" r="1.500" fill="#777" />
    <circle cx="31.300" cy="22" r="1.500" fill="#777" />
  </g>
);

const phpAvatar = (
  <g>
    <circle cx="20" cy="20" r="20" fill="#bcbcbc" />
    <clipPath id="cA"><circle cx="20" cy="20" r="20" /></clipPath>
    <g clipPath="url(#cA)">
      <rect x="3.500" y="8" width="33" height="23.500" fill="#f4f4f4" stroke="#8b9196" strokeWidth="1" />
      <path d="M0 8.200h40" stroke="#8b9196" strokeWidth="2.400" />
      <path d="M0 31.500h40" stroke="#9a9ea2" strokeWidth="1" />
      <rect x="12" y="12" width="12.500" height="16.500" fill="#2f7be0" />
      <path d="M5.500 13.500H9M5.500 17H9M5.500 20.500H9M5.500 24H9M26 13.500h8M26 16h8M26 18.500h8M26 21h8M26 23.500h7M26 26h4" stroke="#999" strokeWidth="1.100" />
    </g>
  </g>
);

const excelAvatar = (
  <g>
    <clipPath id="cB"><circle cx="20" cy="20" r="20" /></clipPath>
    <g clipPath="url(#cB)">
      <rect width="40" height="40" fill="#bcbcbc" />
      <rect x="20" y="6.500" width="17.500" height="27" fill="#fff" />
      <path d="M23.500 10.500h12M23.500 15h12M23.500 19.500h12M23.500 24h12M23.500 28.500h12" stroke="#1f7a48" strokeWidth="2.800" strokeDasharray="5.500 1.500" />
      <path d="M0 5 23 1v37L0 34.500z" fill="#217346" />
      <path d="m8 13.500 8.500 13M16.500 13.500 8 26.500" stroke="#fff" strokeWidth="2.800" />
      <path d="m22 3 5-1 3 5-1 4-5-2zM30 12l6-1 3 4-3 4-5-3z" fill="#3a82d8" />
    </g>
    <circle cx="20" cy="20" r="19.500" fill="none" stroke="#bcbcbc" />
  </g>
);

const results = [
  { a: eclipseAvatar, t: 'eclipse.exe', p: 'C:\\Users\\lonelythinker\\Desktop\\hain\\programs\\eclipse.exe.lnk', sel: true },
  { a: eclipseAvatar, t: 'eclipse.exe', p: 'C:\\Users\\lonelythinker\\Desktop\\hain\\programs\\eclipse.exe.lnk' },
  { a: phpAvatar, t: 'eclipse-php', p: 'C:\\Users\\lonelythinker\\AppData\\Roaming\\Microsoft\\Windows\\Start Menu\\Programs\\eclipse-php.lnk' },
  { a: excelAvatar, t: 'Excel 2016', p: 'C:\\ProgramData\\Microsoft\\Windows\\Start Menu\\Programs\\Excel 2016.lnk' },
  { a: wechatAvatar, t: '微信wechat wexin', p: 'C:\\Users\\lonelythinker\\Desktop\\hain\\programs\\微信wechat wexin.lnk' },
  { a: wechatAvatar, t: '微信wechat wexin', p: 'C:\\Users\\lonelythinker\\Desktop\\hain\\programs\\微信wechat wexin.lnk' },
];

function Key({ children }: { children: React.ReactNode }) {
  return (
    <span className="flex h-[19px] items-center rounded-[2px] border border-[#b4b9be] bg-[#eeeeee] px-[1.5px] text-[#828282] shadow-[inset_0_0_0_1px_#fff,0_1px_0_#e0e0e0]">
      {children}
    </span>
  );
}

function Launcher() {
  return (
    <div className="absolute left-[727px] top-[282px] flex h-[530px] w-[800px] flex-col bg-white px-3 font-['Roboto','Noto_Sans_CJK_SC',sans-serif]">
      <div className="flex h-[35px] items-center justify-between pl-[3px] pr-[3px] text-[11px] text-[#a0a0a0]">
        <span className="tracking-[0.05px]">Hain</span>
        <div className="flex items-center gap-[3px] tracking-[0.08px]">
          <Key><span className="w-[7px] text-center">↓</span></Key>
          <Key><span className="w-[7px] text-center">↑</span></Key>
          <span>to navigate,</span>
          <Key>tab</Key>
          <span>to expand(redirect),</span>
          <Key>enter</Key>
          <span>to execute</span>
        </div>
      </div>
      <div className="flex h-6 items-center border-b-2 border-[#00bcd4] pb-[4px] text-base leading-4 text-[#3c3c3c]">eclipse</div>
      <div className="mt-4 flex h-[440px]">
        <div className="h-full flex-1 overflow-hidden">
          <div className="flex h-8 items-center pb-[2px] pl-4 text-[13px] text-[#8f8f8f]">Files &amp; Folders</div>
          {results.map((row, k) => (
            <div key={k} className={row.sel ? 'flex h-[69px] items-center bg-[#cccccc] pl-4' : 'flex h-[69px] items-center pl-4'}>
              <svg viewBox="0 0 40 40" className="mb-[-3px] h-10 w-10 shrink-0">{row.a}</svg>
              <div className="ml-4 flex flex-col whitespace-pre pt-[2px]">
                <span className="text-[15px] leading-[19px] text-[#363636]">{row.t}</span>
                <span className={row.sel ? 'text-[13px] leading-[18px] text-[#7a7a7a]' : 'text-[13px] leading-[18px] text-[#999999]'}>{row.p}</span>
              </div>
            </div>
          ))}
        </div>
        <div className="h-full w-2 rounded-full bg-[#eeeeee]">
          <div className="h-[181px] w-2 rounded-full bg-[#cccccc]" />
        </div>
      </div>
    </div>
  );
}

function Bubble() {
  return (
    <div className="absolute left-[1697px] top-[153px] flex h-8 w-[132px] items-center rounded-[2px] bg-white pl-[11px]">
      <svg viewBox="0 0 6 10" className="absolute -left-[5px] top-[11px] h-[10px] w-[6px]"><path d="M6 0v10L0 5z" fill="#fff" /></svg>
      <svg viewBox="0 0 16 16" className="h-4 w-4" fill="none" stroke="#ff5a52" strokeWidth="1.100">
        <path d="M6.500 5v10M9.500 5v10M2.500 12h11" stroke="#ffc9c5" />
        <path d="M.6 4.500h14.800v3.300H.6zM2 8v7.400h12V8" />
        <path d="M8 4.500C5.500 4.500 4 3.500 4.300 2.200 4.800.8 7.300 1 8 4.500c.7-3.500 3.200-3.700 3.700-2.300C12 3.500 10.500 4.500 8 4.500z" />
      </svg>
      <span className="ml-[9px] font-['Noto_Sans_CJK_SC',sans-serif] text-[14px] leading-none text-[#333333]">签到领空间</span>
      <svg viewBox="0 0 9 9" className="ml-[8px] h-[9px] w-[9px]" stroke="#555" strokeWidth=".9"><path d="m.5.5 8 8M8.500.5l-8 8" /></svg>
      <svg viewBox="0 0 132 32" className="absolute left-0 top-0 h-8 w-[132px]" stroke="#ffd0d0" strokeWidth="1">
        <path d="M4 5.500h5M6.500 3v5M76 3l3-3M6 32l4-4M119 30l4-3M30 8h2" fill="none" />
      </svg>
    </div>
  );
}

export default function App() {
  return (
    <div className="h-[1238px] w-[1867px] overflow-hidden bg-white">
      {defs}
      <div className="relative flex h-[965px] overflow-hidden bg-black font-['Open_Sans','Noto_Sans_CJK_SC',sans-serif] text-xs leading-[17px] text-white">
        <div className="flex w-[167px] shrink-0 flex-col overflow-hidden pt-[11px] text-[#eeeeee]">
          {tasks.map((task) => (
            <div key={task.t} className={`${task.box} flex shrink-0 justify-end whitespace-pre`}>
              <span>{task.t}</span>
            </div>
          ))}
        </div>
        <div className="-mt-[6px] grid shrink-0 auto-cols-[77px] auto-rows-[80px] content-start">
          {items.map((item) => (
            <DesktopItem key={`${item.c}-${item.r}`} {...item} />
          ))}
        </div>
        <Launcher />
        <Bubble />
      </div>
    </div>
  );
}
